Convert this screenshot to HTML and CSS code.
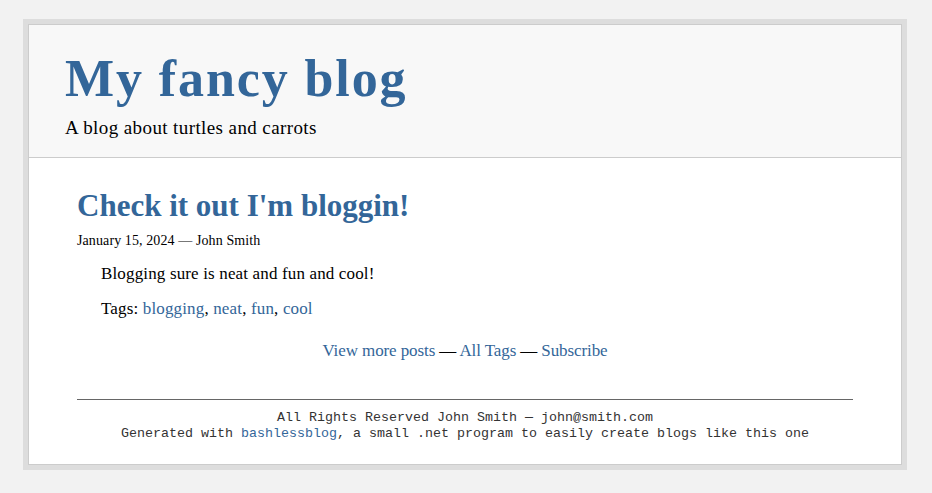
FILE: index.html
```html
<!DOCTYPE html>
<html lang="en">
<head>
<meta charset="utf-8">
<title>My fancy blog</title>
<link rel="stylesheet" href="styles.css">
</head>
<body>
<div class="frame">
  <div class="inner">
    <header class="site-header">
      <h1 class="site-title">My fancy blog</h1>
      <p class="site-desc">A blog about turtles and carrots</p>
    </header>
    <main class="content">
      <article class="post">
        <h2 class="post-title"><a href="#">Check it out I'm bloggin!</a></h2>
        <div class="post-meta">January 15, 2024 — John Smith</div>
        <div class="post-body">
          <p>Blogging sure is neat and fun and cool!</p>
          <p>Tags: <a href="#">blogging</a>, <a href="#">neat</a>, <a href="#">fun</a>, <a href="#">cool</a></p>
        </div>
      </article>
      <nav class="more">
        <a href="#">View more posts</a> — <a href="#">All Tags</a> — <a href="#">Subscribe</a>
      </nav>
      <footer class="site-footer">
        <div>All Rights Reserved John Smith — john@smith.com</div>
        <div>Generated with <a href="#">bashlessblog</a>, a small .net program to easily create blogs like this one</div>
      </footer>
    </main>
  </div>
</div>
</body>
</html>
```

FILE: styles.css
```css
html, body {
  margin: 0;
  padding: 0;
  background: #f2f2f2;
}
body {
  font-family: "Liberation Serif", "DejaVu Serif", serif;
  color: #000;
  padding-top: 19px;
}
a {
  color: #336699;
  text-decoration: none;
}
.frame {
  width: 874px;
  margin-left: 23px;
  border: 5px solid #ddd;
}
.inner {
  border: 1px solid #ccc;
  background: #fff;
}
.site-header {
  background: #f8f8f8;
  border-bottom: 1px solid #ccc;
  padding: 24px 36px 17px;
}
.site-title {
  margin: 0;
  font-size: 52px;
  line-height: 60px;
  font-weight: bold;
  letter-spacing: 1.9px;
  color: #336699;
}
.site-desc {
  margin: 7px 0 0;
  font-size: 19px;
  line-height: 24px;
  letter-spacing: 0.4px;
}
.content {
  padding: 0 48px;
}
.post-title {
  margin: 30px 0 0;
  font-size: 31px;
  line-height: 36px;
  font-weight: bold;
}
.post-meta {
  margin-top: 8px;
  font-size: 14px;
  line-height: 18px;
  letter-spacing: 0.1px;
}
.post-body {
  padding-left: 24px;
  font-size: 17px;
  line-height: 22px;
  letter-spacing: 0.15px;
}
.post-body p {
  margin: 13px 0 0;
}
.more {
  text-align: center;
  margin-top: 20px;
  font-size: 17px;
  line-height: 22px;
  letter-spacing: -0.1px;
}
.site-footer {
  margin-top: 37px;
  border-top: 1px solid #666;
  padding: 10px 0 22px;
  text-align: center;
  font-family: "Liberation Mono", "DejaVu Sans Mono", monospace;
  font-size: 13.33px;
  line-height: 16px;
  color: #333;
}
```
